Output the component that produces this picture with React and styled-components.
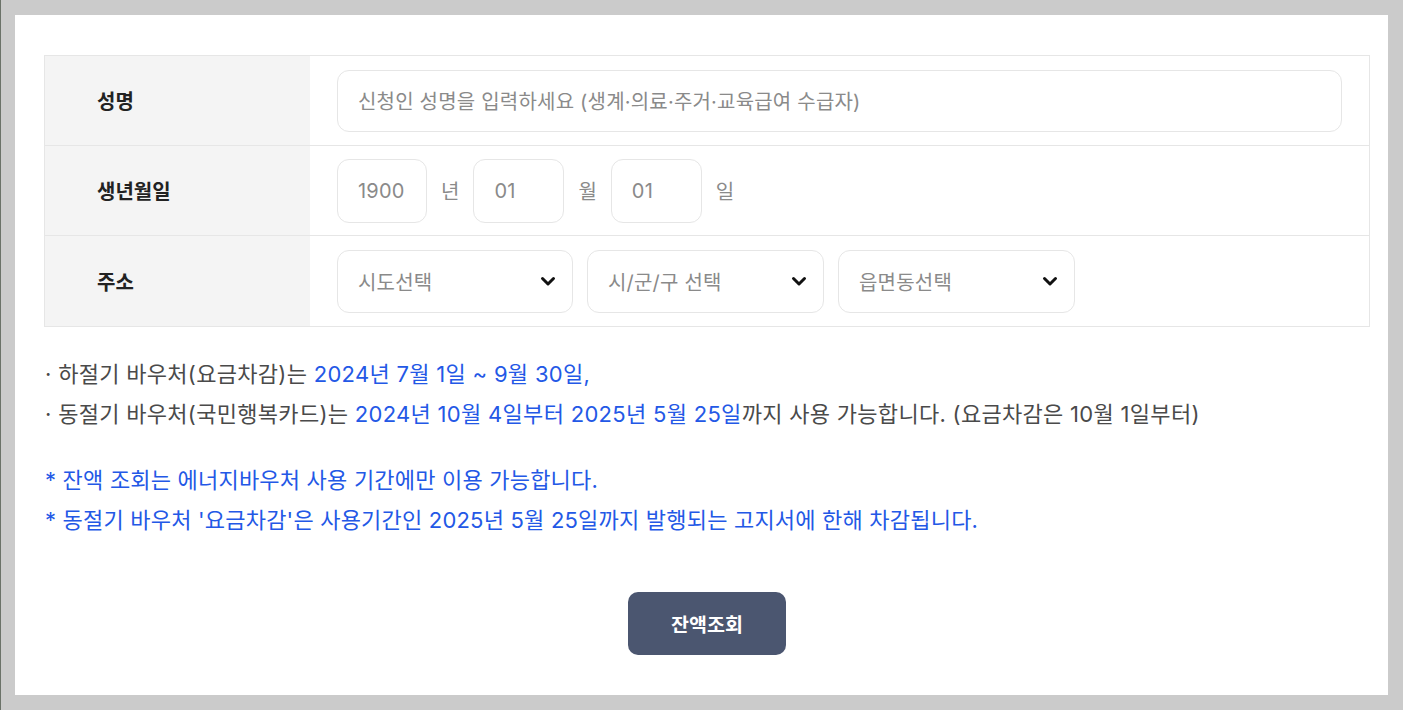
import React from "react";
import styled, { createGlobalStyle } from "styled-components";

const Global = createGlobalStyle`
  html, body { margin: 0; padding: 0; }
  body {
    background: #cbcbcb;
    font-family: Inter, "Noto Sans CJK KR", sans-serif;
    -webkit-font-smoothing: antialiased;
  }
`;

const Frame = styled.div`
  min-height: 710px;
  box-sizing: border-box;
  border-left: 1px solid #6b7268;
  padding: 15px 15px 15px 14px;
`;

const Panel = styled.div`
  background: #fff;
  width: 1373px;
  height: 680px;
  box-sizing: border-box;
  padding: 40px 18px 0 29px;
  display: flex;
  flex-direction: column;
`;

const Table = styled.div`
  border: 1px solid #e6e6e6;
  display: flex;
  flex-direction: column;
`;

const Row = styled.div`
  display: grid;
  grid-template-columns: 265px 1fr;
  box-sizing: border-box;
  height: 90px;
  border-bottom: ${(p) => (p.$last ? "none" : "1px solid #e6e6e6")};
`;

const Label = styled.div`
  background: #f4f4f4;
  display: flex;
  align-items: center;
  padding-left: 52px;
  font-size: 20px;
  font-weight: 600;
  color: #222;
`;

const Cell = styled.div`
  display: flex;
  align-items: center;
  gap: 14px;
  padding: 0 27px;
`;

const Field = styled.div`
  box-sizing: border-box;
  width: ${(p) => p.$w};
  height: ${(p) => p.$h || "62px"};
  border: 1px solid #e6e6e6;
  border-radius: 12px;
  display: flex;
  align-items: center;
  padding-left: 20px;
  font-size: 20px;
  letter-spacing: 0.2px;
  color: #8a8a8a;
  background: #fff;
`;

const Unit = styled.span`
  font-size: 20px;
  color: #8a8a8a;
`;

const Select = styled(Field)`
  justify-content: space-between;
  padding-right: 16px;
  height: 63px;
`;

const Chevron = () => (
  <svg width="16" height="12" viewBox="0 0 16 12" aria-hidden="true">
    <path d="M2.5 3.5 L8 9 L13.5 3.5" fill="none" stroke="#111" strokeWidth="3" strokeLinecap="round" strokeLinejoin="round" />
  </svg>
);

const Notes = styled.div`
  margin-top: 27px;
  font-size: 22px;
  letter-spacing: 0.3px;
  line-height: 40px;
  color: #4a4a4a;
  padding-left: 1px;
  white-space: nowrap;
`;

const Blue = styled.span`
  color: #2358e6;
`;

const Warn = styled(Notes)`
  margin-top: 26px;
  letter-spacing: 0.2px;
  color: #2358e6;
`;

const Actions = styled.div`
  display: flex;
  justify-content: center;
  margin-top: 52px;
`;

const Button = styled.button`
  width: 158px;
  height: 63px;
  border: none;
  border-radius: 10px;
  background: #4b5670;
  color: #fff;
  font-family: inherit;
  font-size: 19.5px;
  font-weight: 600;
  cursor: pointer;
`;

export default function App() {
  return (
    <>
      <Global />
      <Frame>
        <Panel>
          <Table>
            <Row>
              <Label>성명</Label>
              <Cell>
                <Field $w="1005px">신청인 성명을 입력하세요 (생계·의료·주거·교육급여 수급자)</Field>
              </Cell>
            </Row>
            <Row>
              <Label>생년월일</Label>
              <Cell>
                <Field $w="90px" $h="64px">1900</Field>
                <Unit>년</Unit>
                <Field $w="91px" $h="64px">01</Field>
                <Unit>월</Unit>
                <Field $w="91px" $h="64px">01</Field>
                <Unit>일</Unit>
              </Cell>
            </Row>
            <Row $last>
              <Label>주소</Label>
              <Cell>
                <Select $w="236px">시도선택<Chevron /></Select>
                <Select $w="237px">시/군/구 선택<Chevron /></Select>
                <Select $w="237px">읍면동선택<Chevron /></Select>
              </Cell>
            </Row>
          </Table>
          <Notes>
            <div>
              · 하절기 바우처(요금차감)는 <Blue>2024년 7월 1일 ~ 9월 30일,</Blue>
            </div>
            <div>
              · 동절기 바우처(국민행복카드)는 <Blue>2024년 10월 4일부터 2025년 5월 25일</Blue>까지 사용 가능합니다. (요금차감은 10월 1일부터)
            </div>
          </Notes>
          <Warn>
            <div>* 잔액 조회는 에너지바우처 사용 기간에만 이용 가능합니다.</div>
            <div>* 동절기 바우처 '요금차감'은 사용기간인 2025년 5월 25일까지 발행되는 고지서에 한해 차감됩니다.</div>
          </Warn>
          <Actions>
            <Button>잔액조회</Button>
          </Actions>
        </Panel>
      </Frame>
    </>
  );
}
